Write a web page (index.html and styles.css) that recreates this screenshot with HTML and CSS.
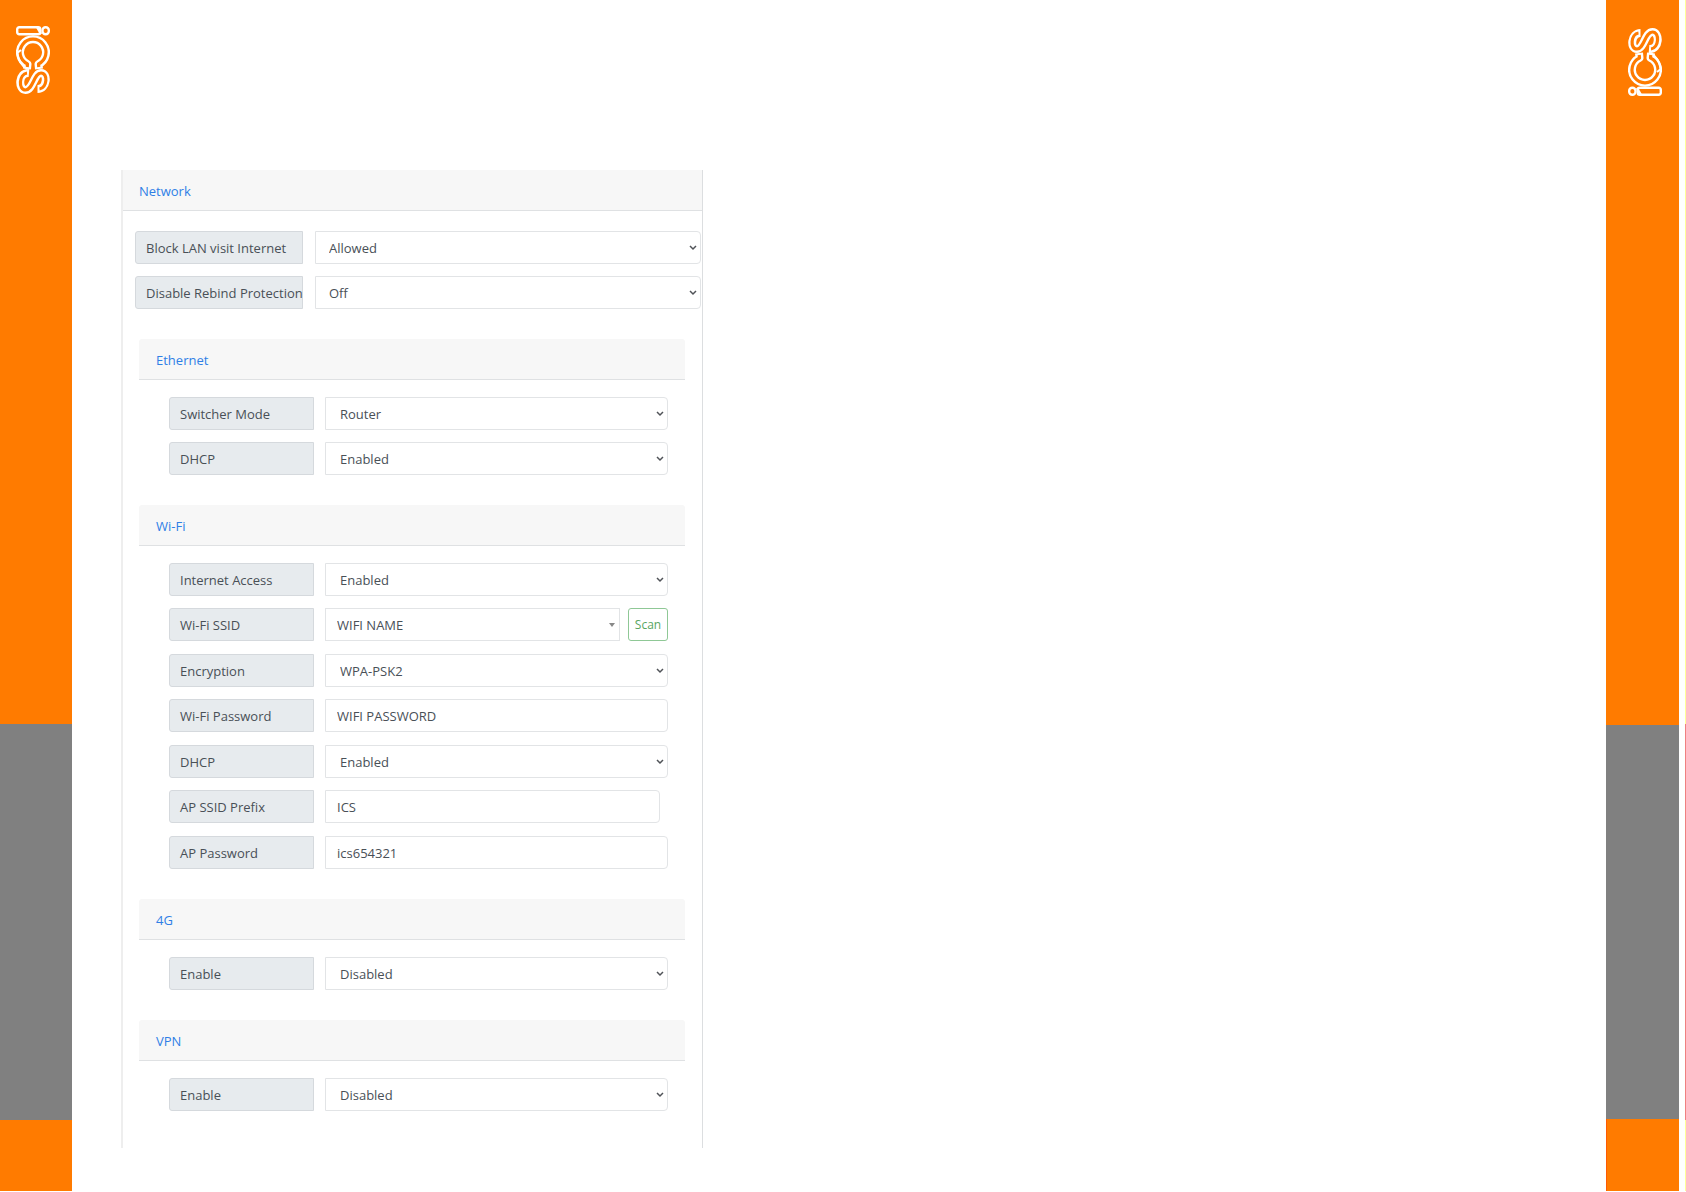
FILE: index.html
```html
<!DOCTYPE html>
<html lang="en">
<head>
<meta charset="utf-8">
<meta name="viewport" content="width=device-width, initial-scale=1">
<title>ICS - Network</title>
<link rel="stylesheet" href="styles.css">
</head>
<body>
<svg width="0" height="0" class="sprite" aria-hidden="true">
  <symbol id="logo" viewBox="0 0 34 70">
    <g fill="none" stroke-linecap="butt" stroke-linejoin="round">
      <rect x="1.200" y="1.200" width="23" height="7" rx="2" stroke="#fff" stroke-width="2.400"/>
      <path d="M21 1l4 7" stroke="#fff" stroke-width="2.400"/>
      <rect x="26.500" y="1.200" width="6.300" height="7" rx="3" stroke="#fff" stroke-width="2.400"/>
      <path d="M11 43L11.500 38A13 13 0 1 1 22.500 38L23 43" stroke="#fff" stroke-width="8"/>
      <path d="M11.200 41L11.500 38A13 13 0 1 1 22.500 38L22.800 41" stroke="#ff7b00" stroke-width="3.200"/>
      <path d="M5 24L1.200 27Q3 38 11 43" stroke="#fff" stroke-width="2"/>
      <path d="M13 47C2 46 2 64 9.500 64C17 64 18 47 25 47C32.500 47 31 63 21.500 63" stroke="#fff" stroke-width="8"/>
      <path d="M11 47C3 48 2 64 9.500 64C17 64 18 47 25 47C32.500 47 31 62 23.500 63" stroke="#ff7b00" stroke-width="3.200"/>
    </g>
  </symbol>
</svg>
<div class="page">
  <aside class="rail">
    <div class="rail-top"><svg class="logo" role="img" aria-label="ICS"><use href="#logo"/></svg></div>
    <div class="rail-mid"></div>
    <div class="rail-end"></div>
  </aside>
  <main class="content">
    <section class="panel">
      <h1 class="bar">Network</h1>
      <div class="rows rows-wide">
        <div class="row"><label class="tag" for="lan">Block LAN visit Internet</label><span class="pick"><select id="lan" class="box"><option>Allowed</option></select><svg class="chev" viewBox="0 0 8 6"><path d="M1 1l3 3 3-3"/></svg></span></div>
        <div class="row"><label class="tag" for="rebind">Disable Rebind Protection</label><span class="pick"><select id="rebind" class="box"><option>Off</option></select><svg class="chev" viewBox="0 0 8 6"><path d="M1 1l3 3 3-3"/></svg></span></div>
      </div>
      <section class="group">
        <h2 class="bar">Ethernet</h2>
        <div class="rows">
          <div class="row"><label class="tag" for="mode">Switcher Mode</label><span class="pick"><select id="mode" class="box"><option>Router</option></select><svg class="chev" viewBox="0 0 8 6"><path d="M1 1l3 3 3-3"/></svg></span></div>
          <div class="row"><label class="tag" for="edhcp">DHCP</label><span class="pick"><select id="edhcp" class="box"><option>Enabled</option></select><svg class="chev" viewBox="0 0 8 6"><path d="M1 1l3 3 3-3"/></svg></span></div>
        </div>
      </section>
      <section class="group">
        <h2 class="bar">Wi-Fi</h2>
        <div class="rows">
          <div class="row"><label class="tag" for="access">Internet Access</label><span class="pick"><select id="access" class="box"><option>Enabled</option></select><svg class="chev" viewBox="0 0 8 6"><path d="M1 1l3 3 3-3"/></svg></span></div>
          <div class="row"><label class="tag" for="ssid">Wi-Fi SSID</label><span class="pick"><select id="ssid" class="box box-text box-square"><option>WIFI NAME</option></select><svg class="caret" viewBox="0 0 6 4"><path d="M0 0h6L3 4z"/></svg></span><button type="button" class="scan">Scan</button></div>
          <div class="row"><label class="tag" for="enc">Encryption</label><span class="pick"><select id="enc" class="box"><option>WPA-PSK2</option></select><svg class="chev" viewBox="0 0 8 6"><path d="M1 1l3 3 3-3"/></svg></span></div>
          <div class="row"><label class="tag" for="wpass">Wi-Fi Password</label><span class="pick"><input id="wpass" class="box box-text" type="text" value="WIFI PASSWORD"></span></div>
          <div class="row"><label class="tag" for="wdhcp">DHCP</label><span class="pick"><select id="wdhcp" class="box"><option>Enabled</option></select><svg class="chev" viewBox="0 0 8 6"><path d="M1 1l3 3 3-3"/></svg></span></div>
          <div class="row row-short"><label class="tag" for="prefix">AP SSID Prefix</label><span class="pick"><input id="prefix" class="box box-text" type="text" value="ICS"></span></div>
          <div class="row"><label class="tag" for="appass">AP Password</label><span class="pick"><input id="appass" class="box box-text" type="text" value="ics654321"></span></div>
        </div>
      </section>
      <section class="group">
        <h2 class="bar">4G</h2>
        <div class="rows">
          <div class="row"><label class="tag" for="g4">Enable</label><span class="pick"><select id="g4" class="box"><option>Disabled</option></select><svg class="chev" viewBox="0 0 8 6"><path d="M1 1l3 3 3-3"/></svg></span></div>
        </div>
      </section>
      <section class="group">
        <h2 class="bar">VPN</h2>
        <div class="rows">
          <div class="row"><label class="tag" for="vpn">Enable</label><span class="pick"><select id="vpn" class="box"><option>Disabled</option></select><svg class="chev" viewBox="0 0 8 6"><path d="M1 1l3 3 3-3"/></svg></span></div>
        </div>
      </section>
    </section>
  </main>
  <aside class="rail rail-right">
    <div class="rail-top"><svg class="logo logo-flip" role="img" aria-label="ICS"><use href="#logo"/></svg></div>
    <div class="rail-mid"></div>
    <div class="rail-end"></div>
  </aside>
  <div class="edge"><div class="rail-top"></div><div class="rail-mid"></div><div class="rail-end"></div></div>
</div>
</body>
</html>
```
FILE: styles.css
```css
* { box-sizing: border-box; }
body {
  margin: 0;
  background: #fff;
  color: #495057;
  font: 13px/20px "Open Sans", "Noto Sans", sans-serif;
}
.sprite { position: absolute; }
.page {
  display: flex;
  min-height: 100vh;
  border-bottom: 1px solid #000;
}

/* side rails */
.rail, .edge {
  display: flex;
  flex-direction: column;
  flex: none;
  width: 72px;
  padding-bottom: 1px;
}
.rail-top { flex: 723; background: #ff7b00; }
.rail-mid { flex: 396; background: #808080; }
.rail-end { flex: 71; background: #ff7b00; }
.rail-right { width: 73px; }
.rail-right .rail-top { flex-grow: 724; }
.rail-right .rail-mid { flex-grow: 394; }
.rail-right .rail-end { flex-grow: 72; border-left: 1px solid #ff5a00; }
.logo {
  display: block;
  width: 34px;
  height: 70px;
  margin: 26px 0 0 16px;
}
.logo-flip { margin-left: 22px; transform: rotate(180deg); }
.edge { width: 1px; margin-left: 6px; }
.edge .rail-top, .edge .rail-end { background: #ffff99; }
.edge .rail-mid { background: #f08080; }

/* settings panel */
.content { flex: 1; padding: 170px 0 44px 49px; }
.panel {
  width: 100%;
  max-width: 582px;
  padding-bottom: 37px;
  border-left: 2px solid #eee;
  border-right: 1px solid #dcdee0;
}
.bar {
  height: 41px;
  margin: 0;
  padding: 11px 16px 9px;
  background: #f7f7f7;
  border-bottom: 1px solid #dfe1e3;
  color: #2f7fe6;
  font-size: 13px;
  font-weight: 400;
}
.group { margin: 30px 17px 0 16px; }
.group .bar { padding-left: 17px; border-radius: 3px 3px 0 0; }
.rows { padding: 17px 17px 0 30px; }
.rows-wide { padding: 20px 1px 0 12px; }
.row { display: flex; height: 33px; }
.row:nth-child(odd):not(:last-child) { margin-bottom: 12px; }
.row:nth-child(even):not(:last-child) { margin-bottom: 13px; }
.row-short { padding-right: 8px; }
.tag {
  flex: none;
  width: 145px;
  margin-right: 11px;
  padding: 6px 10px;
  background: #e7ebee;
  border: 1px solid #d5d9dd;
  border-radius: 3px 0 0 3px;
  white-space: nowrap;
}
.rows-wide .tag { width: 168px; margin-right: 12px; }
.pick { position: relative; flex: 1; }
.box {
  appearance: none;
  display: block;
  width: 100%;
  height: 33px;
  padding: 0 14px;
  background: #fff;
  border: 1px solid #e2e4e6;
  border-radius: 0 4px 4px 0;
  color: #495057;
  font: inherit;
}
.rows-wide .box { padding: 0 13px; }
.box-text { padding: 0 11px; }
.box-square { border-radius: 0; }
.chev, .caret { position: absolute; pointer-events: none; }
.chev {
  top: 14px;
  right: 4px;
  width: 8px;
  height: 6px;
  fill: none;
  stroke: #505358;
  stroke-width: 1.5;
}
.caret { top: 15px; right: 5px; width: 6px; height: 4px; fill: #888; }
.scan {
  width: 40px;
  margin-left: 8px;
  padding: 0;
  background: #fff;
  border: 1px solid #8fc896;
  border-radius: 3px;
  color: #59a562;
  font: inherit;
  font-size: 12px;
}
```
